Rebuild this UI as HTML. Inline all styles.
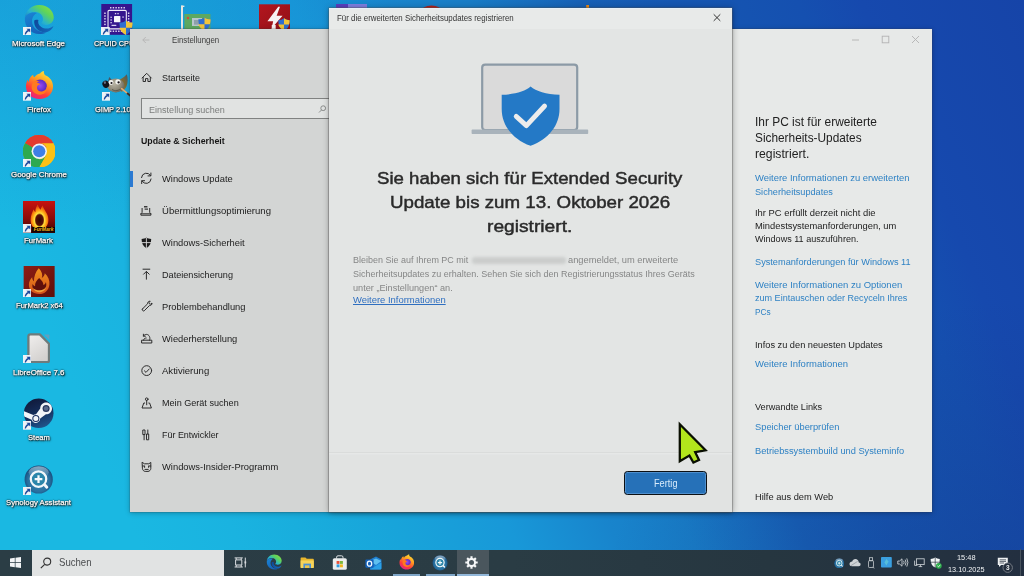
<!DOCTYPE html>
<html lang="de">
<head>
<meta charset="utf-8">
<title>Einstellungen – Windows Update</title>
<style>
*{box-sizing:border-box;margin:0;padding:0}
html,body{width:1024px;height:576px;overflow:hidden}
body{position:relative;font-family:"Liberation Sans",sans-serif;background:#1a8fdc}
.abs{position:absolute}
.t{position:absolute;white-space:nowrap;line-height:1;transform-origin:0 50%;display:inline-block}
.lbl{text-shadow:0 0 1.2px #000,0 0 2px rgba(0,0,0,.9),0.6px 1px 1.6px rgba(0,0,0,.95),0.6px 1.2px 2.4px rgba(0,0,0,.7)}
#bg{left:0;top:0;width:1024px;height:576px;
 background:
  radial-gradient(ellipse 420px 230px at 0 0,rgba(20,120,205,.3) 0%,rgba(20,120,205,0) 100%),
  radial-gradient(ellipse 420px 300px at 1024px 600px,rgba(22,50,130,.38) 0%,rgba(22,50,130,0) 100%),
  linear-gradient(67.6deg,#1ab8e2 0%,#1ab8e2 12%,#1ab3e0 20%,#19aedd 25%,#18a4da 33%,#1898d8 42%,#1884cc 50%,#187cc6 56%,#176dbe 61%,#1660b6 65%,#1557b2 72%,#1550b0 82%,#1649ae 87%,#1644a8 100%);}
#desk,#settings,#dialog,#taskbar{position:absolute;left:0;top:0;width:1024px;height:576px;overflow:hidden}
.ico{position:absolute}
/* settings window */
#swin{left:130px;top:28.5px;width:801.5px;height:483px;background:#e7e9e8;box-shadow:0 0 0 .5px rgba(60,60,60,.3),0 1px 5px rgba(0,0,0,.28)}
#snav{left:130px;top:28.5px;width:199px;height:483px;background:#d3d5d4}
#ssearch{left:141.3px;top:98.4px;width:195px;height:20.4px;background:#e1e3e2;border:1.3px solid #808281}
#sind{left:130px;top:170.5px;width:2.6px;height:16px;background:#2b7ad2}
/* dialog */
#dshadow{left:329px;top:7.5px;width:402.9px;height:504.2px;box-shadow:0 0 7px .5px rgba(0,0,0,.3),0 1px 3px rgba(0,0,0,.18)}
#dwin{left:329px;top:7.5px;width:402.9px;height:504.2px;background:#e3e5e4;box-shadow:0 0 0 .6px rgba(90,90,90,.55)}
#dtitle{left:329px;top:7.5px;width:402.9px;height:21.5px;background:linear-gradient(180deg,#e8eae9 0,#e8eae9 19.5px,#e3e5e4 21.5px);border-top:1px solid #e6f0f8}
#dfoot{left:329px;top:452px;width:402.9px;height:59.7px;background:#e1e3e2;border-top:1.2px solid #dadcdb;box-shadow:inset 0 1.5px 0 #e6e8e7}
#dblur{left:471.7px;top:257px;width:94px;height:6.5px;border-radius:3px;background:#cbcdcc;filter:blur(1.5px)}
#dbtn{left:624.2px;top:470.5px;width:83px;height:24.3px;border-radius:3.4px;background:#2671b8;border:1.8px solid #0c1014;box-shadow:inset 0 0 0 .8px rgba(150,195,240,.5)}
/* taskbar */
#tbar{left:0;top:549.6px;width:1024px;height:26.4px;background:linear-gradient(90deg,#2b3d45 0%,#2a3c44 50%,#263640 75%,#232f40 100%)}
#tsearch{left:31.8px;top:549.8px;width:192.2px;height:26.2px;background:#e1e3e3}
#tactive{left:456.5px;top:549.6px;width:32.8px;height:26.4px;background:#4a565d}
.tul{position:absolute;top:574.2px;height:1.8px;background:#7fa6c8}
</style>
</head>
<body>
<div id="bg" class="abs"></div>

<div id="desk">
<svg class="ico" style="left:23px;top:3.8px;" width="32.4" height="31" viewBox="0 0 32 32"><defs><linearGradient id="eg1" x1="0.1" y1="0.9" x2="0.95" y2="0.15"><stop offset="0" stop-color="#1b74c6"/><stop offset=".38" stop-color="#27b3cf"/><stop offset=".72" stop-color="#5fd45a"/><stop offset="1" stop-color="#84dc48"/></linearGradient><linearGradient id="eg2" x1="0" y1="0" x2="0.6" y2="1"><stop offset="0" stop-color="#1a86d6"/><stop offset="1" stop-color="#1560b8"/></linearGradient><linearGradient id="eg3" x1="0" y1="0" x2="1" y2="0.4"><stop offset="0" stop-color="#0d479a"/><stop offset="1" stop-color="#1466b8"/></linearGradient></defs><path d="M1.2 14.5 C1.6 6.8 8 1 16 1 C25 1 31 7.4 31 13.6 C31 18.6 27.2 21.6 22.6 21.6 C19.4 21.6 18.2 20.6 18.2 19.7 C18.2 18.8 19.9 18.2 19.9 15.4 C19.9 11.4 16.2 8.2 11.6 8.2 C6.4 8.2 1.6 11.6 1.2 14.5Z" fill="url(#eg1)"/><path d="M1.2 14.5 C0.6 23.4 7.4 31 16 31 C19 31 21.4 30.4 23.4 29.3 C14.2 29.8 8.6 23.8 8.6 17.9 C8.6 13.2 11.8 10.2 13.6 9.4 C8 7.6 1.8 10.8 1.2 14.5Z" fill="url(#eg2)"/><path d="M10.9 17 C10 24 16.4 30.6 24.2 29 C27.6 27.8 30 25 30.8 22.4 C28 25.4 22.2 26.6 18.2 23.8 C15.2 21.7 14.4 18.8 15.2 16.4 C13.6 15.9 11.6 16.1 10.9 17Z" fill="url(#eg3)"/></svg>
<svg class="ico" style="left:22.8px;top:26.6px;" width="8.7" height="8.7" viewBox="0 0 9 9"><rect x="0" y="0" width="9" height="9" fill="#eef2f6"/><path d="M3.6 1.7 H7.5 V5.6 L6.2 4.3 C4.6 5 3.6 6 3 7.8 L1.8 7.8 C1.8 5.6 3 4 4.9 3Z" fill="#1d4a9c"/></svg>
<svg class="ico" style="left:24.6px;top:70.2px;" width="29" height="30" viewBox="0 0 30 30"><defs><linearGradient id="fg1" x1="0.75" y1="0.05" x2="0.25" y2="1"><stop offset="0" stop-color="#ffe03a"/><stop offset=".35" stop-color="#ff9a1f"/><stop offset=".7" stop-color="#ff3b3b"/><stop offset="1" stop-color="#e3228a"/></linearGradient><radialGradient id="fg2" cx=".5" cy=".45" r=".6"><stop offset="0" stop-color="#9a4cf0"/><stop offset="1" stop-color="#4a1fb8"/></radialGradient></defs><path d="M15.5 3 C16.6 1.6 18.2 0.6 19.6 0.4 C19.2 2 19.8 3.6 21 5 C25.6 6.8 29 11 29 16.6 C29 24 23 29.6 15 29.6 C7 29.6 1 24 1 16.6 C1 13.6 1.8 11.4 2.8 9.6 C3 10.6 3.4 11.4 4 12 C4 9 5.4 6 8.4 4.4 C8.4 5.6 8.8 6.4 9.6 7 C11 4.8 13.4 3.4 15.5 3Z" fill="url(#fg1)"/><circle cx="15.6" cy="16.4" r="7" fill="url(#fg2)"/><path d="M8.2 12.4 C10 10.4 13 10 15 11.2 C13.4 11.4 12.6 12.2 12.6 13 C14 13 15.4 13.6 15.8 14.6 C14.4 14.8 12.4 15.6 12.4 17.8 C12.4 20.4 15 22 17.6 21.6 C20.4 21.2 22.6 19 22.6 16 C23.8 19.6 21.6 24.6 16 25 C10 25.4 6 20.6 7 15.6 C7.2 14.4 7.6 13.2 8.2 12.4Z" fill="#ff7a1f"/></svg>
<svg class="ico" style="left:22.8px;top:92.2px;" width="8.7" height="8.7" viewBox="0 0 9 9"><rect x="0" y="0" width="9" height="9" fill="#eef2f6"/><path d="M3.6 1.7 H7.5 V5.6 L6.2 4.3 C4.6 5 3.6 6 3 7.8 L1.8 7.8 C1.8 5.6 3 4 4.9 3Z" fill="#1d4a9c"/></svg>
<svg class="ico" style="left:22.8px;top:134.8px;" width="32.5" height="32.5" viewBox="0 0 32 32"><circle cx="16" cy="16" r="16" fill="#fbc116"/><path d="M16 16 L2.14 8 A16 16 0 0 1 29.86 8 Z" fill="#e33b2e"/><path d="M16 16 L29.86 8 L16 8Z" fill="#e33b2e"/><path d="M16 16 L2.14 8 A16 16 0 0 0 16 32 Z" fill="#2da94f"/><path d="M16 16 L16 32 L9.07 20 Z" fill="#2da94f"/><path d="M16 8 L29.86 8 A16 16 0 0 0 2.14 8 L9.07 12 A8 8 0 0 1 16 8Z" fill="#e33b2e"/><path d="M9.07 12 L2.14 8 A16 16 0 0 0 16 32 L22.93 20 A8 8 0 0 1 9.07 20 A8 8 0 0 1 9.07 12Z" fill="#2da94f"/><path d="M16 8 L29.86 8 A16 16 0 0 1 16 32 L22.93 20 A8 8 0 0 0 16 8Z" fill="#fbc116"/><circle cx="16" cy="16" r="7.6" fill="#f1f3f4"/><circle cx="16" cy="16" r="6" fill="#3f7fe6"/></svg>
<svg class="ico" style="left:22.8px;top:158.6px;" width="8.7" height="8.7" viewBox="0 0 9 9"><rect x="0" y="0" width="9" height="9" fill="#eef2f6"/><path d="M3.6 1.7 H7.5 V5.6 L6.2 4.3 C4.6 5 3.6 6 3 7.8 L1.8 7.8 C1.8 5.6 3 4 4.9 3Z" fill="#1d4a9c"/></svg>
<svg class="ico" style="left:22.8px;top:200.5px;" width="32" height="32" viewBox="0 0 32 32"><defs><linearGradient id="fm1" x1="0" y1="0" x2="0" y2="1"><stop offset="0" stop-color="#c8120f"/><stop offset=".55" stop-color="#8a0c0a"/><stop offset="1" stop-color="#3a0404"/></linearGradient><radialGradient id="fm2" cx=".5" cy=".62" r=".56"><stop offset="0" stop-color="#2e0804"/><stop offset=".38" stop-color="#5a1006"/><stop offset=".5" stop-color="#ffe03a"/><stop offset=".72" stop-color="#ff9a12"/><stop offset="1" stop-color="#e2420c"/></radialGradient></defs><rect width="32" height="32" fill="url(#fm1)"/><path d="M7.6 19 C7.6 14 9.6 10.6 10.6 8.2 C11 9.6 11.6 10.6 12.4 11.2 C12.2 8.6 13.2 5.6 14.8 3.6 C15.4 6 16.4 7.6 17.6 8.8 C18 7.2 18.6 5.8 19.6 4.6 C20.4 7 21.6 8.8 22.6 10.4 C24.4 12.8 25.4 15.6 25.4 19 C25.4 25 21.6 28.6 16.5 28.6 C11.4 28.6 7.6 25 7.6 19Z" fill="url(#fm2)"/><rect x="9" y="26" width="23" height="5.4" fill="#120303"/><text x="20.6" y="30.4" font-family="Liberation Sans, sans-serif" font-size="5" font-weight="700" font-style="italic" fill="#f2b81a" text-anchor="middle">FurMark</text></svg>
<svg class="ico" style="left:22.8px;top:224px;" width="8.7" height="8.7" viewBox="0 0 9 9"><rect x="0" y="0" width="9" height="9" fill="#eef2f6"/><path d="M3.6 1.7 H7.5 V5.6 L6.2 4.3 C4.6 5 3.6 6 3 7.8 L1.8 7.8 C1.8 5.6 3 4 4.9 3Z" fill="#1d4a9c"/></svg>
<svg class="ico" style="left:22.7px;top:266px;" width="32.3" height="31" viewBox="0 0 32 32"><defs><linearGradient id="f21" x1="0" y1="0" x2="1" y2="1"><stop offset="0" stop-color="#8e1d14"/><stop offset="1" stop-color="#5e0f0b"/></linearGradient><linearGradient id="f22" x1="0" y1="0" x2="0" y2="1"><stop offset="0" stop-color="#f2921e"/><stop offset="1" stop-color="#d2501a"/></linearGradient></defs><rect width="32" height="32" fill="url(#f21)"/><path d="M15.6 2.4 C19 6 19.8 9.4 18.8 12.4 C20.6 11.4 21.6 9.6 21.8 7.6 C25.4 11 27 15 26.6 19 C26 25 21.6 29 16 29 C10 29 5.4 25 5.4 19.4 C5.4 16 7 13.4 8.8 11.6 C8.8 13.4 9.4 14.8 10.6 15.8 C10.6 10.8 12.4 6 15.6 2.4Z" fill="url(#f22)"/><path d="M16 12.4 C18.4 15 20.4 16.4 20.4 19.6 C22 18.8 22.8 17.6 23 16.4 C24.6 22 21 26.4 16 26.4 C11 26.4 8.2 22.8 9.2 18.6 C9.8 19.8 10.8 20.6 11.8 20.8 C11.4 17.6 13.6 14.6 16 12.4Z" fill="#5e0f0b"/><path d="M9.4 22.6 C11 26 14 27.4 17 27 C20.6 26.6 23 24 23.4 21.4 C22 23.6 19.6 25 16.8 25 C13.8 25 11 24.2 9.4 22.6Z" fill="#f2a03a"/></svg>
<svg class="ico" style="left:22.8px;top:288.6px;" width="8.7" height="8.7" viewBox="0 0 9 9"><rect x="0" y="0" width="9" height="9" fill="#eef2f6"/><path d="M3.6 1.7 H7.5 V5.6 L6.2 4.3 C4.6 5 3.6 6 3 7.8 L1.8 7.8 C1.8 5.6 3 4 4.9 3Z" fill="#1d4a9c"/></svg>
<svg class="ico" style="left:26.6px;top:332.6px;" width="23.4" height="30.6" viewBox="0 0 23.4 30.6"><defs><linearGradient id="lo1" x1="0" y1="0" x2="0.5" y2="1"><stop offset="0" stop-color="#f1efee"/><stop offset="1" stop-color="#d3d1cf"/></linearGradient></defs><path d="M17 1.4 H21.6 Q22.4 1.4 22.4 2.2 V7Z" fill="#c8808c" opacity=".4"/><path d="M3.4 1.4 H12.8 L22 10.8 V27.2 Q22 29.2 20 29.2 H3.4 Q1.4 29.2 1.4 27.2 V3.4 Q1.4 1.4 3.4 1.4Z" fill="url(#lo1)" stroke="#6f7b7b" stroke-width="2.3" stroke-linejoin="round"/></svg>
<svg class="ico" style="left:22.8px;top:354.6px;" width="8.7" height="8.7" viewBox="0 0 9 9"><rect x="0" y="0" width="9" height="9" fill="#eef2f6"/><path d="M3.6 1.7 H7.5 V5.6 L6.2 4.3 C4.6 5 3.6 6 3 7.8 L1.8 7.8 C1.8 5.6 3 4 4.9 3Z" fill="#1d4a9c"/></svg>
<svg class="ico" style="left:23.2px;top:398.4px;border-radius:50%;" width="31.4" height="30.4" viewBox="0 0 32 32"><defs><linearGradient id="st1" x1="0.3" y1="0" x2="0.7" y2="1"><stop offset="0" stop-color="#10193a"/><stop offset=".55" stop-color="#15305f"/><stop offset="1" stop-color="#21588f"/></linearGradient></defs><circle cx="16" cy="16" r="15.6" fill="url(#st1)"/><path d="M0.6 14 L10.4 18 C11.2 17.4 12.2 17.2 13.2 17.2 L17.6 11 C17.6 7.4 20.4 4.8 23.8 4.8 C27.2 4.8 30 7.6 30 11 C30 14.4 27.2 17.2 23.6 17.2 L17.6 21.6 C17.6 24.2 15.6 26.2 13 26.2 C10.8 26.2 9 24.8 8.6 22.8 L0.8 19.6 C0.5 18 0.4 15.6 0.6 14Z" fill="#f2f4f8"/><circle cx="23.8" cy="11" r="3.7" fill="#27365c"/><circle cx="23.8" cy="11" r="2.4" fill="#5a6a8c"/><circle cx="13" cy="21.6" r="3.2" fill="none" stroke="#1a2f60" stroke-width="1.1"/></svg>
<svg class="ico" style="left:22.8px;top:421px;" width="8.7" height="8.7" viewBox="0 0 9 9"><rect x="0" y="0" width="9" height="9" fill="#eef2f6"/><path d="M3.6 1.7 H7.5 V5.6 L6.2 4.3 C4.6 5 3.6 6 3 7.8 L1.8 7.8 C1.8 5.6 3 4 4.9 3Z" fill="#1d4a9c"/></svg>
<svg class="ico" style="left:24.4px;top:464.5px;" width="29.4" height="29" viewBox="0 0 30 30"><defs><radialGradient id="sy1" cx=".5" cy=".55" r=".55"><stop offset="0" stop-color="#3c8fb4"/><stop offset=".7" stop-color="#2870a0"/><stop offset="1" stop-color="#154878"/></radialGradient><linearGradient id="sy1h" x1="0" y1="0" x2="0" y2="1"><stop offset="0" stop-color="#fff" stop-opacity=".5"/><stop offset="1" stop-color="#fff" stop-opacity="0"/></linearGradient></defs><circle cx="15" cy="15" r="14.6" fill="url(#sy1)"/><ellipse cx="15" cy="7.4" rx="10.4" ry="6.2" fill="url(#sy1h)"/><circle cx="14.8" cy="14.6" r="8" fill="#2b86aa" stroke="#f2f7fa" stroke-width="2.3"/><path d="M14.8 10.6 V18.6 M10.8 14.6 H18.8" stroke="#f6fafc" stroke-width="2.3" fill="none"/><path d="M21.6 21 L23.4 23" stroke="#f2f7fa" stroke-width="3" stroke-linecap="round"/></svg>
<svg class="ico" style="left:22.8px;top:486.6px;" width="8.7" height="8.7" viewBox="0 0 9 9"><rect x="0" y="0" width="9" height="9" fill="#eef2f6"/><path d="M3.6 1.7 H7.5 V5.6 L6.2 4.3 C4.6 5 3.6 6 3 7.8 L1.8 7.8 C1.8 5.6 3 4 4.9 3Z" fill="#1d4a9c"/></svg>
<svg class="ico" style="left:101.4px;top:4.2px;" width="31.4" height="30.8" viewBox="0 0 32 32"><rect width="32" height="32" fill="#35158e"/><rect x="7" y="6.6" width="19" height="19.2" rx="1.2" fill="none" stroke="#efeaf9" stroke-width="1.15"/><rect x="13.2" y="12.4" width="6.6" height="6.6" rx="0.6" fill="#f6f4fb"/><rect x="9.05" y="3.15" width="1.5" height="1.5" fill="#e4def4"/><rect x="11.85" y="3.15" width="1.5" height="1.5" fill="#e4def4"/><rect x="14.65" y="3.15" width="1.5" height="1.5" fill="#e4def4"/><rect x="17.45" y="3.15" width="1.5" height="1.5" fill="#e4def4"/><rect x="20.25" y="3.15" width="1.5" height="1.5" fill="#e4def4"/><rect x="23.05" y="3.15" width="1.5" height="1.5" fill="#e4def4"/><rect x="9.05" y="27.55" width="1.5" height="1.5" fill="#e4def4"/><rect x="11.85" y="27.55" width="1.5" height="1.5" fill="#e4def4"/><rect x="14.65" y="27.55" width="1.5" height="1.5" fill="#e4def4"/><rect x="17.45" y="27.55" width="1.5" height="1.5" fill="#e4def4"/><rect x="20.25" y="27.55" width="1.5" height="1.5" fill="#e4def4"/><rect x="23.05" y="27.55" width="1.5" height="1.5" fill="#e4def4"/><rect x="3.05" y="8.85" width="1.5" height="1.5" fill="#e4def4"/><rect x="3.05" y="11.75" width="1.5" height="1.5" fill="#e4def4"/><rect x="3.05" y="14.65" width="1.5" height="1.5" fill="#e4def4"/><rect x="3.05" y="17.55" width="1.5" height="1.5" fill="#e4def4"/><rect x="3.05" y="20.45" width="1.5" height="1.5" fill="#e4def4"/><rect x="27.65" y="8.85" width="1.5" height="1.5" fill="#e4def4"/><rect x="27.65" y="11.75" width="1.5" height="1.5" fill="#e4def4"/><rect x="27.65" y="14.65" width="1.5" height="1.5" fill="#e4def4"/><rect x="27.65" y="17.55" width="1.5" height="1.5" fill="#e4def4"/><rect x="27.65" y="20.45" width="1.5" height="1.5" fill="#e4def4"/><rect x="9.50" y="13.10" width="1.4" height="1.4" fill="#d9d0f0"/><rect x="9.50" y="15.90" width="1.4" height="1.4" fill="#d9d0f0"/><rect x="14.10" y="9.30" width="1.4" height="1.4" fill="#d9d0f0"/><rect x="16.70" y="9.30" width="1.4" height="1.4" fill="#d9d0f0"/><rect x="21.90" y="12.90" width="1.4" height="1.4" fill="#d9d0f0"/><rect x="9.50" y="18.70" width="1.4" height="1.4" fill="#d9d0f0"/><rect x="10.6" y="21.6" width="5" height="1.3" fill="#d9d0f0"/></svg>
<svg class="ico" style="left:118.6px;top:20px;" width="14" height="15.400000000000002" viewBox="0 0 10 11"><path d="M5 0.3 C6.4 1.4 8 1.8 9.7 1.8 C9.7 6 8.4 9 5 10.7 C1.6 9 0.3 6 0.3 1.8 C2 1.8 3.6 1.4 5 0.3Z" fill="#2f6fd0"/><path d="M5 0.3 C6.4 1.4 8 1.8 9.7 1.8 C9.7 3.4 9.5 4.6 9.2 5.5 L5 5.5Z" fill="#f2c53a"/><path d="M5 5.5 L5 10.7 C1.6 9 0.3 6 0.3 5.5Z" fill="#f2c53a"/></svg>
<svg class="ico" style="left:101.4px;top:26.6px;" width="8.7" height="8.7" viewBox="0 0 9 9"><rect x="0" y="0" width="9" height="9" fill="#eef2f6"/><path d="M3.6 1.7 H7.5 V5.6 L6.2 4.3 C4.6 5 3.6 6 3 7.8 L1.8 7.8 C1.8 5.6 3 4 4.9 3Z" fill="#1d4a9c"/></svg>
<svg class="ico" style="left:102px;top:73.6px;" width="28" height="24" viewBox="0 0 28 24"><defs><radialGradient id="gi1" cx=".4" cy=".4" r=".7"><stop offset="0" stop-color="#b9b4a4"/><stop offset=".6" stop-color="#8f8a7a"/><stop offset="1" stop-color="#5e5a4e"/></radialGradient><linearGradient id="gi2" x1="0" y1="1" x2="1" y2="0"><stop offset="0" stop-color="#8a8468"/><stop offset=".6" stop-color="#7c6a34"/><stop offset="1" stop-color="#4a5a6a"/></linearGradient></defs><path d="M15 6.4 C18.4 5.8 22 3.4 24.8 0.2 C26 3.6 26 8.4 24.6 12 C23.4 15 21.4 17.2 19 18 Z" fill="url(#gi2)"/><path d="M6 7.4 L7.2 3 L10 6Z" fill="#4a5660"/><ellipse cx="13.8" cy="11.4" rx="8.6" ry="7" fill="url(#gi1)"/><ellipse cx="3.8" cy="10.2" rx="3.4" ry="3.7" fill="#14141a" transform="rotate(-20 3.8 10.2)"/><ellipse cx="2.9" cy="8.6" rx="1.1" ry="1.4" fill="#7a8aa0" opacity=".8"/><circle cx="9" cy="8.5" r="2.4" fill="#f4f4f0"/><circle cx="15.9" cy="7.8" r="2.6" fill="#f4f4f0"/><circle cx="9.5" cy="9" r="1.05" fill="#17131a"/><circle cx="16.6" cy="8.4" r="1.15" fill="#17131a"/><path d="M10 15.4 C13 17.6 17 16.6 19.4 14.2" fill="none" stroke="#5a5648" stroke-width="0.9"/><path d="M19.6 14.6 L27.6 21.2" stroke="#e6ab72" stroke-width="1.7" stroke-linecap="round"/><path d="M25.6 19.6 L28 21.6" stroke="#3a2f2a" stroke-width="1.9" stroke-linecap="round"/></svg>
<svg class="ico" style="left:101.6px;top:92.3px;" width="8.7" height="8.7" viewBox="0 0 9 9"><rect x="0" y="0" width="9" height="9" fill="#eef2f6"/><path d="M3.6 1.7 H7.5 V5.6 L6.2 4.3 C4.6 5 3.6 6 3 7.8 L1.8 7.8 C1.8 5.6 3 4 4.9 3Z" fill="#1d4a9c"/></svg>
<svg class="ico" style="left:180px;top:4.6px;" width="32" height="27" viewBox="0 0 32 27"><rect x="1" y="0.6" width="2" height="26" fill="#e4e6e2"/><rect x="0" y="25" width="6" height="1.6" fill="#d0d2ce"/><path d="M1 0.6 H4.4 V2 H1Z" fill="#e4e6e2"/><rect x="4.4" y="9" width="26" height="16" fill="#5da861"/><rect x="12" y="13" width="10" height="8" fill="#b9c6cc"/><rect x="14" y="15" width="6" height="4.6" fill="#8ea0aa"/><circle cx="8" cy="13" r="1.2" fill="#d24a3a"/></svg>
<svg class="ico" style="left:198px;top:17px;" width="13" height="14.3" viewBox="0 0 10 11"><path d="M5 0.3 C6.4 1.4 8 1.8 9.7 1.8 C9.7 6 8.4 9 5 10.7 C1.6 9 0.3 6 0.3 1.8 C2 1.8 3.6 1.4 5 0.3Z" fill="#2f6fd0"/><path d="M5 0.3 C6.4 1.4 8 1.8 9.7 1.8 C9.7 3.4 9.5 4.6 9.2 5.5 L5 5.5Z" fill="#f2c53a"/><path d="M5 5.5 L5 10.7 C1.6 9 0.3 6 0.3 5.5Z" fill="#f2c53a"/></svg>
<svg class="ico" style="left:258.8px;top:4.2px;" width="31.4" height="32" viewBox="0 0 32 32"><defs><linearGradient id="rl1" x1="0" y1="0" x2="1" y2="1"><stop offset="0" stop-color="#b3161e"/><stop offset="1" stop-color="#8e1016"/></linearGradient></defs><rect width="32" height="32" fill="url(#rl1)"/><path d="M19.6 2.6 L8.6 17.4 L14.4 17.4 L12 30 L15.6 30 L15.6 21.4 L24 11.6 L18 11.6 L21.4 2.6Z" fill="#f7f2f2"/><path d="M13 21 L13 32 L17 32 L17 21Z" fill="#f7f2f2"/></svg>
<svg class="ico" style="left:278.4px;top:18.4px;" width="12" height="13.200000000000001" viewBox="0 0 10 11"><path d="M5 0.3 C6.4 1.4 8 1.8 9.7 1.8 C9.7 6 8.4 9 5 10.7 C1.6 9 0.3 6 0.3 1.8 C2 1.8 3.6 1.4 5 0.3Z" fill="#2f6fd0"/><path d="M5 0.3 C6.4 1.4 8 1.8 9.7 1.8 C9.7 3.4 9.5 4.6 9.2 5.5 L5 5.5Z" fill="#f2c53a"/><path d="M5 5.5 L5 10.7 C1.6 9 0.3 6 0.3 5.5Z" fill="#f2c53a"/></svg>
<svg class="ico" style="left:336px;top:4px;" width="31" height="6" viewBox="0 0 31 6"><rect width="31" height="6" fill="#5a3fc0"/><rect x="12" width="19" height="6" fill="#7f7fe0"/></svg>
<svg class="ico" style="left:420.5px;top:4.6px;" width="21" height="6" viewBox="0 0 21 6"><ellipse cx="10.5" cy="6" rx="10.5" ry="5.4" fill="#b0221e"/></svg>
<svg class="ico" style="left:586px;top:4.6px;" width="3.4" height="4" viewBox="0 0 3 4"><rect width="3" height="4" fill="#e88a1a"/></svg>
<span class="t lbl desk" style="left:12.0px;top:40.4px;font-size:7.8px;color:#fff;transform:scaleX(1.0189);-webkit-text-stroke:0.25px #fff;">Microsoft Edge</span>
<span class="t lbl desk" style="left:27.0px;top:106.0px;font-size:7.8px;color:#fff;transform:scaleX(1.0066);-webkit-text-stroke:0.25px #fff;">Firefox</span>
<span class="t lbl desk" style="left:10.9px;top:170.6px;font-size:7.8px;color:#fff;transform:scaleX(1.0155);-webkit-text-stroke:0.25px #fff;">Google Chrome</span>
<span class="t lbl desk" style="left:24.3px;top:237.3px;font-size:7.8px;color:#fff;transform:scaleX(0.9955);-webkit-text-stroke:0.25px #fff;">FurMark</span>
<span class="t lbl desk" style="left:16.0px;top:301.9px;font-size:7.8px;color:#fff;transform:scaleX(0.9728);-webkit-text-stroke:0.25px #fff;">FurMark2 x64</span>
<span class="t lbl desk" style="left:12.9px;top:368.5px;font-size:7.8px;color:#fff;transform:scaleX(1.0182);-webkit-text-stroke:0.25px #fff;">LibreOffice 7.6</span>
<span class="t lbl desk" style="left:28.1px;top:434.1px;font-size:7.8px;color:#fff;transform:scaleX(0.9713);-webkit-text-stroke:0.25px #fff;">Steam</span>
<span class="t lbl desk" style="left:6.4px;top:498.7px;font-size:7.8px;color:#fff;transform:scaleX(0.9915);-webkit-text-stroke:0.25px #fff;">Synology Assistant</span>
<span class="t lbl desk" style="left:93.8px;top:40.4px;font-size:7.8px;color:#fff;transform:scaleX(0.9393);-webkit-text-stroke:0.25px #fff;">CPUID CPU-Z</span>
<span class="t lbl desk" style="left:95.0px;top:106.0px;font-size:7.8px;color:#fff;transform:scaleX(0.9590);-webkit-text-stroke:0.25px #fff;">GIMP 2.10.34</span>
</div>

<div id="settings">
<div id="swin" class="abs"></div>
<div id="snav" class="abs"></div>
<div id="ssearch" class="abs"></div>
<div id="sind" class="abs"></div>
<svg class="ico" style="left:141.5px;top:35.6px;" width="8" height="8" viewBox="0 0 8 8"><path d="M7.4 4 H0.8 M3.8 1 L0.8 4 L3.8 7" fill="none" stroke="#b4b4b4" stroke-width="0.9"/></svg>
<svg class="ico" style="left:141px;top:72px;" width="12" height="11" viewBox="0 0 12 11"><path d="M1.1 6 L5.7 1.3 L10.3 6 M2.1 5.4 V9.5 H4.5 V6.6 H6.9 V9.5 H9.3 V5.4" fill="none" stroke="#2c2c2c" stroke-width="1" stroke-linecap="round" stroke-linejoin="round"/></svg>
<svg class="ico" style="left:318px;top:104.8px;" width="9" height="9" viewBox="0 0 9 9"><circle cx="5.2" cy="3.2" r="2.4" fill="none" stroke="#7c7e7d" stroke-width="0.85"/><path d="M3.5 5 L1 7.5" stroke="#7c7e7d" stroke-width="0.85"/></svg>
<svg class="ico" style="left:140px;top:172.4px;" width="13" height="13" viewBox="0 0 13 13"><path d="M1.5 5.6 A4.9 4.9 0 0 1 10.6 3.6 M10.9 1 V3.9 H8 M11.1 7 A4.9 4.9 0 0 1 2 9 M1.7 11.6 V8.7 H4.6" fill="none" stroke="#2c2c2c" stroke-width="1" stroke-linecap="round" stroke-linejoin="round"/></svg>
<svg class="ico" style="left:140.4px;top:205.2px;" width="12" height="11" viewBox="0 0 12 11"><path d="M2.1 3.4 V7.4 L0.9 8.8 V10.2 H10.9 V8.8 L9.7 7.4 V3.4 M1 8.8 H10.8" fill="none" stroke="#2c2c2c" stroke-width="1" stroke-linecap="round" stroke-linejoin="round"/><path d="M4 0.9 H7.4 V2.5 H4Z M4.6 3.6 H8 V4.8 H4.6Z" fill="#3a3a3a"/></svg>
<svg class="ico" style="left:140.8px;top:237px;" width="11" height="12" viewBox="0 0 11 12"><path d="M5.4 0.6 C6.8 1.6 8.4 2 10.2 2 C10.2 6.4 8.8 9.4 5.4 11.2 C2 9.4 0.6 6.4 0.6 2 C2.4 2 4 1.6 5.4 0.6Z" fill="#1c1c1c"/><path d="M5.4 0.8 V11 M0.7 5.6 H10.1" stroke="#dbdbdb" stroke-width="0.9"/></svg>
<svg class="ico" style="left:141.6px;top:268px;" width="9" height="12" viewBox="0 0 9 12"><path d="M1 1.2 H7.8 M4.4 11.2 V3.6 M1.6 6.2 L4.4 3.4 L7.2 6.2" fill="none" stroke="#2c2c2c" stroke-width="1" stroke-linecap="round" stroke-linejoin="round"/></svg>
<svg class="ico" style="left:140.6px;top:300.4px;" width="12" height="12" viewBox="0 0 12 12"><path d="M1.4 9 L6.6 3.8 C6.4 2.4 7.6 1 9.2 1.2 L8 2.6 L8.4 3.8 L9.6 4.2 L11 3 C11.2 4.6 9.8 5.8 8.4 5.6 L3.2 10.8 C2.2 11.6 0.6 10 1.4 9Z" fill="none" stroke="#2c2c2c" stroke-width="1" stroke-linecap="round" stroke-linejoin="round"/></svg>
<svg class="ico" style="left:140.8px;top:333px;" width="12" height="11" viewBox="0 0 12 11"><path d="M1 7.2 H10.8 V10 H1Z M2.6 7.2 C2.6 5.6 4 5 5.2 5 M8.6 7.2 C9.6 5 8.4 1.4 5.4 1.4 C4 1.4 3 2.2 2.6 3 M2.4 1.2 V3.2 H4.4" fill="none" stroke="#2c2c2c" stroke-width="1" stroke-linecap="round" stroke-linejoin="round"/></svg>
<svg class="ico" style="left:140.8px;top:365.2px;" width="12" height="12" viewBox="0 0 12 12"><circle cx="5.7" cy="5.6" r="4.9" fill="none" stroke="#2c2c2c" stroke-width="1" stroke-linecap="round" stroke-linejoin="round"/><path d="M3.4 5.8 L5 7.4 L8.2 4" fill="none" stroke="#2c2c2c" stroke-width="1" stroke-linecap="round" stroke-linejoin="round"/></svg>
<svg class="ico" style="left:140.6px;top:396.6px;" width="12" height="12" viewBox="0 0 12 12"><circle cx="5.7" cy="2.2" r="1.3" fill="none" stroke="#2c2c2c" stroke-width="1" stroke-linecap="round" stroke-linejoin="round"/><path d="M5.7 3.6 V7.8 M3.6 6 H2.8 L1 11 H10.4 L8.6 6 H7.8" fill="none" stroke="#2c2c2c" stroke-width="1" stroke-linecap="round" stroke-linejoin="round"/></svg>
<svg class="ico" style="left:142px;top:428.8px;" width="9" height="12" viewBox="0 0 9 12"><path d="M1.2 1 H3 V5.6 H1.2Z M2.1 5.6 V10.8 M5.8 1 V5 M4.9 5 H6.7 V10.8 H4.9Z" fill="none" stroke="#2c2c2c" stroke-width="1" stroke-linecap="round" stroke-linejoin="round" stroke-width="1.1"/></svg>
<svg class="ico" style="left:140.6px;top:460.8px;" width="12" height="12" viewBox="0 0 12 12"><path d="M1.4 1.4 L3.4 2.8 H7.8 L9.8 1.4 V7.6 C9.8 9 8.4 10.4 7 10.4 H4.2 C2.8 10.4 1.4 9 1.4 7.6Z M1.4 5 H3 M8.2 5 H9.8 M3.6 6.4 V5 M7.6 6.4 V5 M4 8.4 H7.2" fill="none" stroke="#2c2c2c" stroke-width="1" stroke-linecap="round" stroke-linejoin="round"/></svg>
<svg class="ico" style="left:851px;top:35px;" width="10" height="10" viewBox="0 0 10 10"><path d="M1 5 H8" stroke="#b2b2b2" stroke-width="0.9"/></svg>
<svg class="ico" style="left:881px;top:35px;" width="10" height="10" viewBox="0 0 10 10"><rect x="1.2" y="1.2" width="6.6" height="6.6" fill="none" stroke="#b2b2b2" stroke-width="0.9"/></svg>
<svg class="ico" style="left:911.4px;top:35px;" width="10" height="10" viewBox="0 0 10 10"><path d="M1 1 L8 8 M8 1 L1 8" stroke="#b2b2b2" stroke-width="0.9"/></svg>
<span class="t set" style="left:171.7px;top:36.8px;font-size:8.2px;color:#3c3c3c;transform:scaleX(0.9599);">Einstellungen</span>
<span class="t set" style="left:162.2px;top:72.6px;font-size:9.7px;color:#1c1c1c;transform:scaleX(0.9286);">Startseite</span>
<span class="t set" style="left:149.3px;top:104.6px;font-size:9.7px;color:#7c7e7d;transform:scaleX(0.9333);">Einstellung suchen</span>
<span class="t set" style="left:141.2px;top:136.4px;font-size:9.7px;color:#161616;transform:scaleX(0.9092);font-weight:700;">Update &amp; Sicherheit</span>
<span class="t set" style="left:161.8px;top:174.0px;font-size:9.8px;color:#1c1c1c;transform:scaleX(0.9546);">Windows Update</span>
<span class="t set" style="left:161.8px;top:206.0px;font-size:9.8px;color:#1c1c1c;transform:scaleX(0.9763);">Übermittlungsoptimierung</span>
<span class="t set" style="left:161.8px;top:238.0px;font-size:9.8px;color:#1c1c1c;transform:scaleX(0.9541);">Windows-Sicherheit</span>
<span class="t set" style="left:161.8px;top:270.0px;font-size:9.8px;color:#1c1c1c;transform:scaleX(0.9311);">Dateiensicherung</span>
<span class="t set" style="left:161.8px;top:302.0px;font-size:9.8px;color:#1c1c1c;transform:scaleX(0.9521);">Problembehandlung</span>
<span class="t set" style="left:161.8px;top:334.0px;font-size:9.8px;color:#1c1c1c;transform:scaleX(0.9535);">Wiederherstellung</span>
<span class="t set" style="left:161.8px;top:366.0px;font-size:9.8px;color:#1c1c1c;transform:scaleX(0.9738);">Aktivierung</span>
<span class="t set" style="left:161.8px;top:398.0px;font-size:9.8px;color:#1c1c1c;transform:scaleX(0.9265);">Mein Gerät suchen</span>
<span class="t set" style="left:161.8px;top:430.0px;font-size:9.8px;color:#1c1c1c;transform:scaleX(0.9120);">Für Entwickler</span>
<span class="t set" style="left:161.8px;top:462.0px;font-size:9.8px;color:#1c1c1c;transform:scaleX(0.9571);">Windows-Insider-Programm</span>
<span class="t set" style="left:754.7px;top:115.8px;font-size:12.2px;color:#222;transform:scaleX(0.9781);">Ihr PC ist für erweiterte</span>
<span class="t set" style="left:754.7px;top:131.8px;font-size:12.2px;color:#222;transform:scaleX(0.9713);">Sicherheits-Updates</span>
<span class="t set" style="left:754.7px;top:147.8px;font-size:12.2px;color:#222;transform:scaleX(1.0021);">registriert.</span>
<span class="t set" style="left:754.7px;top:172.8px;font-size:9.6px;color:#2f82c4;transform:scaleX(0.9832);">Weitere Informationen zu erweiterten</span>
<span class="t set" style="left:754.7px;top:186.5px;font-size:9.6px;color:#2f82c4;transform:scaleX(0.9545);">Sicherheitsupdates</span>
<span class="t set" style="left:754.7px;top:208.4px;font-size:9.6px;color:#222;transform:scaleX(0.9782);">Ihr PC erfüllt derzeit nicht die</span>
<span class="t set" style="left:754.7px;top:221.1px;font-size:9.6px;color:#222;transform:scaleX(0.9742);">Mindestsystemanforderungen, um</span>
<span class="t set" style="left:754.7px;top:233.8px;font-size:9.6px;color:#222;transform:scaleX(0.9436);">Windows 11 auszuführen.</span>
<span class="t set" style="left:754.7px;top:257.3px;font-size:9.6px;color:#2f82c4;transform:scaleX(0.9577);">Systemanforderungen für Windows 11</span>
<span class="t set" style="left:754.7px;top:280.3px;font-size:9.6px;color:#2f82c4;transform:scaleX(0.9905);">Weitere Informationen zu Optionen</span>
<span class="t set" style="left:754.7px;top:292.9px;font-size:9.6px;color:#2f82c4;transform:scaleX(0.9432);">zum Eintauschen oder Recyceln Ihres</span>
<span class="t set" style="left:754.7px;top:306.5px;font-size:9.6px;color:#2f82c4;transform:scaleX(0.8662);">PCs</span>
<span class="t set" style="left:754.7px;top:339.6px;font-size:9.6px;color:#222;transform:scaleX(0.9615);">Infos zu den neuesten Updates</span>
<span class="t set" style="left:754.7px;top:358.5px;font-size:9.6px;color:#2f82c4;transform:scaleX(0.9871);">Weitere Informationen</span>
<span class="t set" style="left:754.7px;top:402.3px;font-size:9.6px;color:#222;transform:scaleX(0.9545);">Verwandte Links</span>
<span class="t set" style="left:754.7px;top:421.5px;font-size:9.6px;color:#2f82c4;transform:scaleX(0.9697);">Speicher überprüfen</span>
<span class="t set" style="left:754.7px;top:446.0px;font-size:9.6px;color:#2f82c4;transform:scaleX(0.9648);">Betriebssystembuild und Systeminfo</span>
<span class="t set" style="left:754.7px;top:492.4px;font-size:9.6px;color:#222;transform:scaleX(0.9669);">Hilfe aus dem Web</span>
</div>

<div id="dialog">
<div id="dshadow" class="abs"></div>
<div id="dwin" class="abs"></div>
<div id="dtitle" class="abs"></div>
<div id="dfoot" class="abs"></div>
<div id="dblur" class="abs"></div>
<div id="dbtn" class="abs"></div>
<svg class="ico" style="left:711.6px;top:13.4px;" width="10" height="10" viewBox="0 0 10 10"><path d="M1.7 1.3 L8.3 7.9 M8.3 1.3 L1.7 7.9" stroke="#2a2a2a" stroke-width="0.95"/></svg>
<svg class="ico" style="left:470.2px;top:62.6px;" width="120" height="84" viewBox="0 0 120 84"><rect x="12.2" y="1.6" width="95" height="65.4" rx="3" fill="#dadada" stroke="#8c9aa6" stroke-width="2.2"/><rect x="1.6" y="66.6" width="116.6" height="4.4" rx="0.8" fill="#a9b3bb"/><path d="M60.6 23.6 C66 28.4 76 31.4 89.5 31.8 L89.5 46 C89.5 62 79 76 60.6 82.8 C42.2 76 31.7 62 31.7 46 L31.7 31.8 C45.2 31.4 55.2 28.4 60.6 23.6Z" fill="#2479c6"/><path d="M46.2 53.4 L56.4 62.6 L74.6 43" fill="none" stroke="#ececec" stroke-width="4.8" stroke-linecap="round" stroke-linejoin="round"/></svg>
<span class="t dlg" style="left:336.6px;top:15.3px;font-size:8.2px;color:#333;transform:scaleX(0.9634);">Für die erweiterten Sicherheitsupdates registrieren</span>
<span class="t dlg" style="left:377.3px;top:170.6px;font-size:16.9px;color:#2a2a2a;transform:scaleX(1.1026);-webkit-text-stroke:0.45px #2a2a2a;">Sie haben sich für Extended Security</span>
<span class="t dlg" style="left:390.3px;top:194.7px;font-size:16.9px;color:#2a2a2a;transform:scaleX(1.1090);-webkit-text-stroke:0.45px #2a2a2a;">Update bis zum 13. Oktober 2026</span>
<span class="t dlg" style="left:487.2px;top:218.8px;font-size:16.9px;color:#2a2a2a;transform:scaleX(1.1359);-webkit-text-stroke:0.45px #2a2a2a;">registriert.</span>
<span class="t dlg" style="left:352.7px;top:255.8px;font-size:8.8px;color:#858686;transform:scaleX(1.0208);">Bleiben Sie auf Ihrem PC mit</span>
<span class="t dlg" style="left:568.2px;top:255.8px;font-size:8.8px;color:#858686;transform:scaleX(1.0580);">angemeldet, um erweiterte</span>
<span class="t dlg" style="left:352.7px;top:270.2px;font-size:8.8px;color:#858686;transform:scaleX(1.0201);">Sicherheitsupdates zu erhalten. Sehen Sie sich den Registrierungsstatus Ihres Geräts</span>
<span class="t dlg" style="left:352.7px;top:283.5px;font-size:8.8px;color:#858686;transform:scaleX(1.0401);">unter „Einstellungen“ an.</span>
<span class="t dlg" style="left:352.7px;top:295.7px;font-size:8.8px;color:#2f6fc0;transform:scaleX(1.0730);text-decoration:underline;text-underline-offset:0.8px;">Weitere Informationen</span>
<span class="t dlg" style="left:654.0px;top:479.1px;font-size:10px;color:#d8ebfb;transform:scaleX(0.9193);">Fertig</span>
</div>

<div id="taskbar">
<div id="tbar" class="abs"></div>
<div id="tsearch" class="abs"></div>
<div id="tactive" class="abs"></div>
<div class="tul" style="left:392.8px;width:27.4px"></div>
<div class="tul" style="left:425.6px;width:29.4px"></div>
<div class="tul" style="left:456.5px;width:32.8px;background:#93b8da"></div>
<svg class="ico" style="left:10.4px;top:557px;" width="11" height="11" viewBox="0 0 11 11"><path d="M0 1.5 L4.8 0.8 V5.2 H0Z M5.5 0.7 L11 0 V5.2 H5.5Z M0 5.9 H4.8 V10.2 L0 9.5Z M5.5 5.9 H11 V11 L5.5 10.3Z" fill="#f2f4f5"/></svg>
<svg class="ico" style="left:40px;top:556.6px;" width="12" height="12" viewBox="0 0 12 12"><circle cx="7.2" cy="4.6" r="3.5" fill="none" stroke="#333" stroke-width="1.1"/><path d="M4.7 7.3 L0.8 11.2" stroke="#333" stroke-width="1.2"/></svg>
<svg class="ico" style="left:233.6px;top:556.8px;" width="13" height="11" viewBox="0 0 13 11"><path d="M0.6 0.9 H8.8 M0.6 10 H8.8 M1.6 2.9 H7.8 V8 H1.6Z M2.2 0.9 V2.9 M7.2 0.9 V2.9 M2.2 8 V10 M7.2 8 V10 M11.3 0.6 V10.4" fill="none" stroke="#d9dde0" stroke-width="1"/><rect x="10.5" y="4.4" width="1.7" height="2" fill="#d9dde0"/></svg>
<svg class="ico" style="left:266px;top:554.4px;" width="16.4" height="16" viewBox="0 0 32 32"><defs><linearGradient id="teg1" x1="0.1" y1="0.9" x2="0.95" y2="0.15"><stop offset="0" stop-color="#1b74c6"/><stop offset=".38" stop-color="#27b3cf"/><stop offset=".72" stop-color="#5fd45a"/><stop offset="1" stop-color="#84dc48"/></linearGradient><linearGradient id="teg2" x1="0" y1="0" x2="0.6" y2="1"><stop offset="0" stop-color="#1a86d6"/><stop offset="1" stop-color="#1560b8"/></linearGradient><linearGradient id="teg3" x1="0" y1="0" x2="1" y2="0.4"><stop offset="0" stop-color="#0d479a"/><stop offset="1" stop-color="#1466b8"/></linearGradient></defs><path d="M1.2 14.5 C1.6 6.8 8 1 16 1 C25 1 31 7.4 31 13.6 C31 18.6 27.2 21.6 22.6 21.6 C19.4 21.6 18.2 20.6 18.2 19.7 C18.2 18.8 19.9 18.2 19.9 15.4 C19.9 11.4 16.2 8.2 11.6 8.2 C6.4 8.2 1.6 11.6 1.2 14.5Z" fill="url(#teg1)"/><path d="M1.2 14.5 C0.6 23.4 7.4 31 16 31 C19 31 21.4 30.4 23.4 29.3 C14.2 29.8 8.6 23.8 8.6 17.9 C8.6 13.2 11.8 10.2 13.6 9.4 C8 7.6 1.8 10.8 1.2 14.5Z" fill="url(#teg2)"/><path d="M10.9 17 C10 24 16.4 30.6 24.2 29 C27.6 27.8 30 25 30.8 22.4 C28 25.4 22.2 26.6 18.2 23.8 C15.2 21.7 14.4 18.8 15.2 16.4 C13.6 15.9 11.6 16.1 10.9 17Z" fill="url(#teg3)"/></svg>
<svg class="ico" style="left:300px;top:555.6px;" width="14.4" height="12.6" viewBox="0 0 14.4 12.6"><path d="M0.6 2.2 Q0.6 1.4 1.4 1.4 H5.4 L6.8 2.8 H13 Q13.8 2.8 13.8 3.6 V11.6 H0.6Z" fill="#e9b72e"/><path d="M0.6 4.6 H13.8 V11.4 Q13.8 12 13.2 12 H1.2 Q0.6 12 0.6 11.4Z" fill="#f6d35a"/><rect x="3.4" y="7.6" width="7.6" height="4.4" fill="#4a8fd6"/><rect x="5" y="9.4" width="4.4" height="2.6" fill="#e9c44a"/></svg>
<svg class="ico" style="left:332px;top:555.2px;" width="15.6" height="15.4" viewBox="0 0 15.6 15.4"><path d="M4.6 3.6 V2.2 Q4.6 0.8 6 0.8 H9.6 Q11 0.8 11 2.2 V3.6" fill="none" stroke="#dfe3e6" stroke-width="1"/><rect x="0.8" y="3.2" width="14" height="11.6" rx="1.6" fill="#ebedee"/><rect x="4.6" y="6" width="2.9" height="2.9" fill="#e8513a"/><rect x="8" y="6" width="2.9" height="2.9" fill="#7cb83a"/><rect x="4.6" y="9.4" width="2.9" height="2.9" fill="#2f9be0"/><rect x="8" y="9.4" width="2.9" height="2.9" fill="#f2b51c"/></svg>
<svg class="ico" style="left:364.6px;top:555.8px;" width="17" height="14" viewBox="0 0 17 14"><path d="M5 3.4 L11 0.6 L16.4 3.4 V12.6 Q16.4 13.4 15.6 13.4 H5Z" fill="#1f7fd0"/><path d="M5 5 L11 2.6 L16.4 5 L11 9Z" fill="#5fc0f0"/><path d="M5 13.4 L16.4 6.4 V12.6 Q16.4 13.4 15.6 13.4Z" fill="#2aa0e6"/><rect x="0.4" y="3.6" width="8.2" height="8.2" rx="1" fill="#1360b8"/><ellipse cx="4.5" cy="7.7" rx="2.2" ry="2.5" fill="none" stroke="#f4f8fc" stroke-width="1.3"/></svg>
<svg class="ico" style="left:398.8px;top:554.4px;" width="15.6" height="15.6" viewBox="0 0 30 30"><defs><linearGradient id="tfg1" x1="0.75" y1="0.05" x2="0.25" y2="1"><stop offset="0" stop-color="#ffe03a"/><stop offset=".35" stop-color="#ff9a1f"/><stop offset=".7" stop-color="#ff3b3b"/><stop offset="1" stop-color="#e3228a"/></linearGradient><radialGradient id="tfg2" cx=".5" cy=".45" r=".6"><stop offset="0" stop-color="#9a4cf0"/><stop offset="1" stop-color="#4a1fb8"/></radialGradient></defs><path d="M15.5 3 C16.6 1.6 18.2 0.6 19.6 0.4 C19.2 2 19.8 3.6 21 5 C25.6 6.8 29 11 29 16.6 C29 24 23 29.6 15 29.6 C7 29.6 1 24 1 16.6 C1 13.6 1.8 11.4 2.8 9.6 C3 10.6 3.4 11.4 4 12 C4 9 5.4 6 8.4 4.4 C8.4 5.6 8.8 6.4 9.6 7 C11 4.8 13.4 3.4 15.5 3Z" fill="url(#tfg1)"/><circle cx="15.6" cy="16.4" r="7" fill="url(#tfg2)"/><path d="M8.2 12.4 C10 10.4 13 10 15 11.2 C13.4 11.4 12.6 12.2 12.6 13 C14 13 15.4 13.6 15.8 14.6 C14.4 14.8 12.4 15.6 12.4 17.8 C12.4 20.4 15 22 17.6 21.6 C20.4 21.2 22.6 19 22.6 16 C23.8 19.6 21.6 24.6 16 25 C10 25.4 6 20.6 7 15.6 C7.2 14.4 7.6 13.2 8.2 12.4Z" fill="#ff7a1f"/></svg>
<svg class="ico" style="left:432px;top:555.2px;" width="16.2" height="15.6" viewBox="0 0 30 30"><defs><radialGradient id="tsy1" cx=".5" cy=".55" r=".55"><stop offset="0" stop-color="#3c8fb4"/><stop offset=".7" stop-color="#2870a0"/><stop offset="1" stop-color="#154878"/></radialGradient><linearGradient id="tsy1h" x1="0" y1="0" x2="0" y2="1"><stop offset="0" stop-color="#fff" stop-opacity=".5"/><stop offset="1" stop-color="#fff" stop-opacity="0"/></linearGradient></defs><circle cx="15" cy="15" r="14.6" fill="url(#tsy1)"/><ellipse cx="15" cy="7.4" rx="10.4" ry="6.2" fill="url(#tsy1h)"/><circle cx="14.8" cy="14.6" r="8" fill="#2b86aa" stroke="#f2f7fa" stroke-width="2.3"/><path d="M14.8 10.6 V18.6 M10.8 14.6 H18.8" stroke="#f6fafc" stroke-width="2.3" fill="none"/><path d="M21.6 21 L23.4 23" stroke="#f2f7fa" stroke-width="3" stroke-linecap="round"/></svg>
<svg class="ico" style="left:465.4px;top:555.6px;" width="13" height="13" viewBox="0 0 13 13"><path d="M12.71 5.42 L12.71 7.58 L10.97 7.57 L10.42 8.90 L11.65 10.12 L10.12 11.65 L8.90 10.42 L7.57 10.97 L7.58 12.71 L5.42 12.71 L5.43 10.97 L4.10 10.42 L2.88 11.65 L1.35 10.12 L2.58 8.90 L2.03 7.57 L0.29 7.58 L0.29 5.42 L2.03 5.43 L2.58 4.10 L1.35 2.88 L2.88 1.35 L4.10 2.58 L5.43 2.03 L5.42 0.29 L7.58 0.29 L7.57 2.03 L8.90 2.58 L10.12 1.35 L11.65 2.88 L10.42 4.10 L10.97 5.43Z" fill="#f6f7f8"/><circle cx="6.5" cy="6.5" r="2.5" fill="#4a565d"/></svg>
<svg class="ico" style="left:833.6px;top:557.6px;" width="10.6" height="10.6" viewBox="0 0 30 30"><defs><radialGradient id="ssy1" cx=".5" cy=".55" r=".55"><stop offset="0" stop-color="#3c8fb4"/><stop offset=".7" stop-color="#2870a0"/><stop offset="1" stop-color="#154878"/></radialGradient><linearGradient id="ssy1h" x1="0" y1="0" x2="0" y2="1"><stop offset="0" stop-color="#fff" stop-opacity=".5"/><stop offset="1" stop-color="#fff" stop-opacity="0"/></linearGradient></defs><circle cx="15" cy="15" r="14.6" fill="url(#ssy1)"/><ellipse cx="15" cy="7.4" rx="10.4" ry="6.2" fill="url(#ssy1h)"/><circle cx="14.8" cy="14.6" r="8" fill="#2b86aa" stroke="#f2f7fa" stroke-width="2.3"/><path d="M14.8 10.6 V18.6 M10.8 14.6 H18.8" stroke="#f6fafc" stroke-width="2.3" fill="none"/><path d="M21.6 21 L23.4 23" stroke="#f2f7fa" stroke-width="3" stroke-linecap="round"/></svg>
<svg class="ico" style="left:849px;top:558.4px;" width="12" height="9" viewBox="0 0 12 9"><path d="M3 8.2 H9.6 C11 8.2 11.6 7.2 11.6 6.2 C11.6 5.2 10.8 4.4 9.8 4.4 C9.6 2.4 8.2 1 6.4 1 C4.8 1 3.6 2 3.2 3.4 C1.6 3.4 0.5 4.6 0.5 5.9 C0.5 7.2 1.6 8.2 3 8.2Z" fill="#cfd3d6"/><path d="M2 7.6 L8.6 3.4" stroke="#8a9098" stroke-width="0.7"/></svg>
<svg class="ico" style="left:867px;top:557px;" width="8" height="12" viewBox="0 0 8 12"><rect x="2.4" y="0.7" width="3.2" height="3" fill="none" stroke="#c4c9cd" stroke-width="0.8"/><rect x="1.5" y="3.7" width="5" height="6.8" rx="0.7" fill="none" stroke="#c4c9cd" stroke-width="0.8"/><path d="M5.4 10 L7.4 11.2" stroke="#c4c9cd" stroke-width="0.8"/></svg>
<svg class="ico" style="left:881.4px;top:557.4px;" width="10.8" height="10.6" viewBox="0 0 10.8 10.6"><rect width="10.8" height="10.6" rx="0.8" fill="#3a9fe0"/><path d="M5.4 2 L7.6 4.6 L5.4 8.6 L3.4 5.4Z" fill="#5fc6d8" opacity=".8"/></svg>
<svg class="ico" style="left:897px;top:557px;" width="12" height="11" viewBox="0 0 12 11"><path d="M0.8 4 H2.6 L5 1.8 V9.2 L2.6 7 H0.8Z" fill="none" stroke="#d2d7da" stroke-width="0.85" stroke-linejoin="round"/><path d="M6.6 3.8 Q7.6 5.5 6.6 7.2 M8.2 2.6 Q9.8 5.5 8.2 8.4 M9.8 1.4 Q12 5.5 9.8 9.6" fill="none" stroke="#dfe3e6" stroke-width="0.8"/></svg>
<svg class="ico" style="left:914px;top:557.8px;" width="11" height="10" viewBox="0 0 11 10"><rect x="2.4" y="0.8" width="7.8" height="5.8" fill="none" stroke="#cdd2d6" stroke-width="0.85"/><path d="M4.6 8.6 H8.2 M6.4 6.6 V8.6 M0.6 2.6 V7.4 H3.4" fill="none" stroke="#cdd2d6" stroke-width="0.85"/></svg>
<svg class="ico" style="left:929.6px;top:556.8px;" width="12" height="12" viewBox="0 0 12 12"><path d="M5.2 0.6 C6.4 1.5 8 1.9 9.8 1.9 C9.8 6 8.6 8.8 5.2 10.6 C1.8 8.8 0.6 6 0.6 1.9 C2.4 1.9 4 1.5 5.2 0.6Z" fill="#f4f6f7"/><path d="M5.2 0.8 V10.4 M0.7 5.2 H9.7" stroke="#27343c" stroke-width="0.7"/><circle cx="8.8" cy="8.8" r="2.9" fill="#2fae4e"/><path d="M7.4 8.8 L8.5 9.9 L10.3 7.8" fill="none" stroke="#fff" stroke-width="0.8"/></svg>
<svg class="ico" style="left:996.6px;top:557.2px;" width="17" height="17" viewBox="0 0 17 17"><path d="M0.8 0.8 H10.8 V8 H4.2 L2 10 V8 H0.8Z" fill="#eef0f2"/><path d="M2.6 2.8 H9 M2.6 4.4 H9 M2.6 6 H7" stroke="#26303f" stroke-width="0.7"/><circle cx="10.7" cy="10.7" r="4.7" fill="#242e3d" stroke="#747a84" stroke-width="1"/></svg>
<svg class="ico" style="left:1020.3px;top:549px;" width="1" height="27" viewBox="0 0 1 27"><rect width="1" height="27" fill="#48535e"/></svg>
<span class="t tb" style="left:58.8px;top:557.8px;font-size:10.2px;color:#4a4c4e;transform:scaleX(0.9403);">Suchen</span>
<span class="t tb" style="left:956.8px;top:553.6px;font-size:8.1px;color:#f2f4f6;transform:scaleX(0.9129);">15:48</span>
<span class="t tb" style="left:947.8px;top:566.1px;font-size:8.1px;color:#f2f4f6;transform:scaleX(0.9009);">13.10.2025</span>
<span class="t tb" style="left:1005.5px;top:564.6px;font-size:6.8px;color:#e8eaec;transform:scaleX(0.9521);font-weight:700;">3</span>
</div>

<svg class="ico" style="left:676px;top:420px" width="36" height="46" viewBox="0 0 36 46">
<path d="M3.8 4.3 L3.8 41.2 L13.4 35.6 L17.4 42.6 L23 40 L19.2 32.2 L29.6 30.3 Z" fill="#b2e61c" stroke="#0a0f02" stroke-width="2.3" stroke-linejoin="miter"/>
</svg>
</body>
</html>
